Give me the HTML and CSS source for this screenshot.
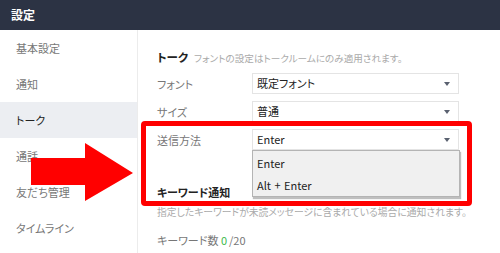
FILE: index.html
```
<!DOCTYPE html>
<html lang="ja">
<head>
    <meta charset="utf-8">
    <title>設定</title>
    <link rel="stylesheet" href="styles.css">
</head>
<body>
    <div class="header">設定</div>
    <div class="layout">
        <div class="sidebar">
            <div class="navItem">基本設定</div>
            <div class="navItem">通知</div>
            <div class="navItem selected">トーク</div>
            <div class="navItem">通話</div>
            <div class="navItem">友だち管理</div>
            <div class="navItem">タイムライン</div>
        </div>
        <div class="main">
            <div class="sectionTitle"><b>トーク</b><span class="note">フォントの設定はトークルームにのみ適用されます。</span></div>
            <div class="row">
                <span class="label">フォント</span>
                <div class="select">既定フォント<span class="caret"></span></div>
            </div>
            <div class="row">
                <span class="label">サイズ</span>
                <div class="select">普通<span class="caret"></span></div>
            </div>
            <div class="row">
                <span class="label">送信方法</span>
                <div class="select open">Enter<span class="caret"></span>
                    <div class="menu">
                        <div class="option">Enter</div>
                        <div class="option">Alt + Enter</div>
                    </div>
                </div>
            </div>
            <div class="keywordTitle">キーワード通知</div>
            <div class="keywordNote">指定したキーワードが未読メッセージに含まれている場合に通知されます。</div>
            <div class="keywordCount">キーワード数 <span class="count">0</span>/20</div>
        </div>
    </div>
    <!-- annotation overlay -->
    <div class="highlight"></div>
    <svg class="arrow" width="500" height="253" viewBox="0 0 500 253">
        <polygon points="31,158 85,158 85,143 133,173 85,201 85,185 31,185" fill="#ff0000"/>
    </svg>
</body>
</html>
```

FILE: styles.css
```
body {
    margin: 0;
    width: 500px;
    height: 253px;
    overflow: hidden;
    position: relative;
    background-color: #fff;
    font-family: "Noto Sans CJK JP", "Noto Sans", sans-serif;
    font-feature-settings: "palt";
    color: #333;
}
.header {
    height: 30px;
    line-height: 30px;
    padding-left: 11px;
    background-color: #2c3344;
    color: #fff;
    font-size: 12px;
    font-weight: bold;
}
.layout {
    display: flex;
    height: 223px;
}
.sidebar {
    width: 137px;
    border-right: 1px solid #ececec;
}
.navItem {
    height: 36px;
    line-height: 36px;
    padding-left: 16px;
    font-size: 11px;
    color: #777;
}
.navItem.selected {
    background-color: #eceef2;
    color: #222;
}
.main {
    flex: 1;
    padding: 19px 0 0 19px;
}
.sectionTitle {
    height: 16px;
    line-height: 16px;
    font-size: 11.5px;
    color: #222;
}
.note {
    margin-left: 6px;
    font-size: 9.6px;
    color: #aaa;
}
.row {
    display: flex;
    align-items: center;
    margin-top: 7px;
}
.sectionTitle + .row {
    margin-top: 8px;
}
.label {
    width: 95px;
    font-size: 11px;
    color: #777;
}
.select {
    position: relative;
    width: 201px;
    height: 19px;
    line-height: 19px;
    padding-left: 4px;
    border: 1px solid #e4e4e4;
    font-size: 11px;
    color: #222;
}
.caret {
    position: absolute;
    right: 8px;
    top: 8px;
    border-left: 3px solid transparent;
    border-right: 3px solid transparent;
    border-top: 4px solid #5a6170;
}
.menu {
    position: absolute;
    left: -1px;
    top: 20px;
    width: 206px;
    height: 45px;
    background-color: #f0f0f0;
    border: 1px solid #b4b4b4;
    box-shadow: 1px 2px 1px rgba(0,0,0,0.25);
    z-index: 2;
}
.option {
    height: 22px;
    line-height: 22px;
    padding-left: 4px;
    font-feature-settings: normal;
    word-spacing: 1px;
}
.option:first-child {
    margin-top: 1px;
}
.keywordTitle {
    margin-top: 34px;
    font-size: 11px;
    font-weight: bold;
    color: #222;
    line-height: 16px;
}
.keywordNote {
    margin-top: 5px;
    font-size: 9.8px;
    color: #aaa;
    line-height: 14px;
}
.keywordCount {
    margin-top: 13px;
    font-size: 11px;
    color: #777;
    line-height: 16px;
}
.count {
    color: #3cb84a;
    margin-right: 2px;
}
.highlight {
    position: absolute;
    left: 141px;
    top: 121px;
    width: 321px;
    height: 75px;
    border: 5px solid #ff0000;
    border-radius: 4px;
    z-index: 3;
}
.arrow {
    position: absolute;
    left: 0;
    top: 0;
    z-index: 3;
}
```
